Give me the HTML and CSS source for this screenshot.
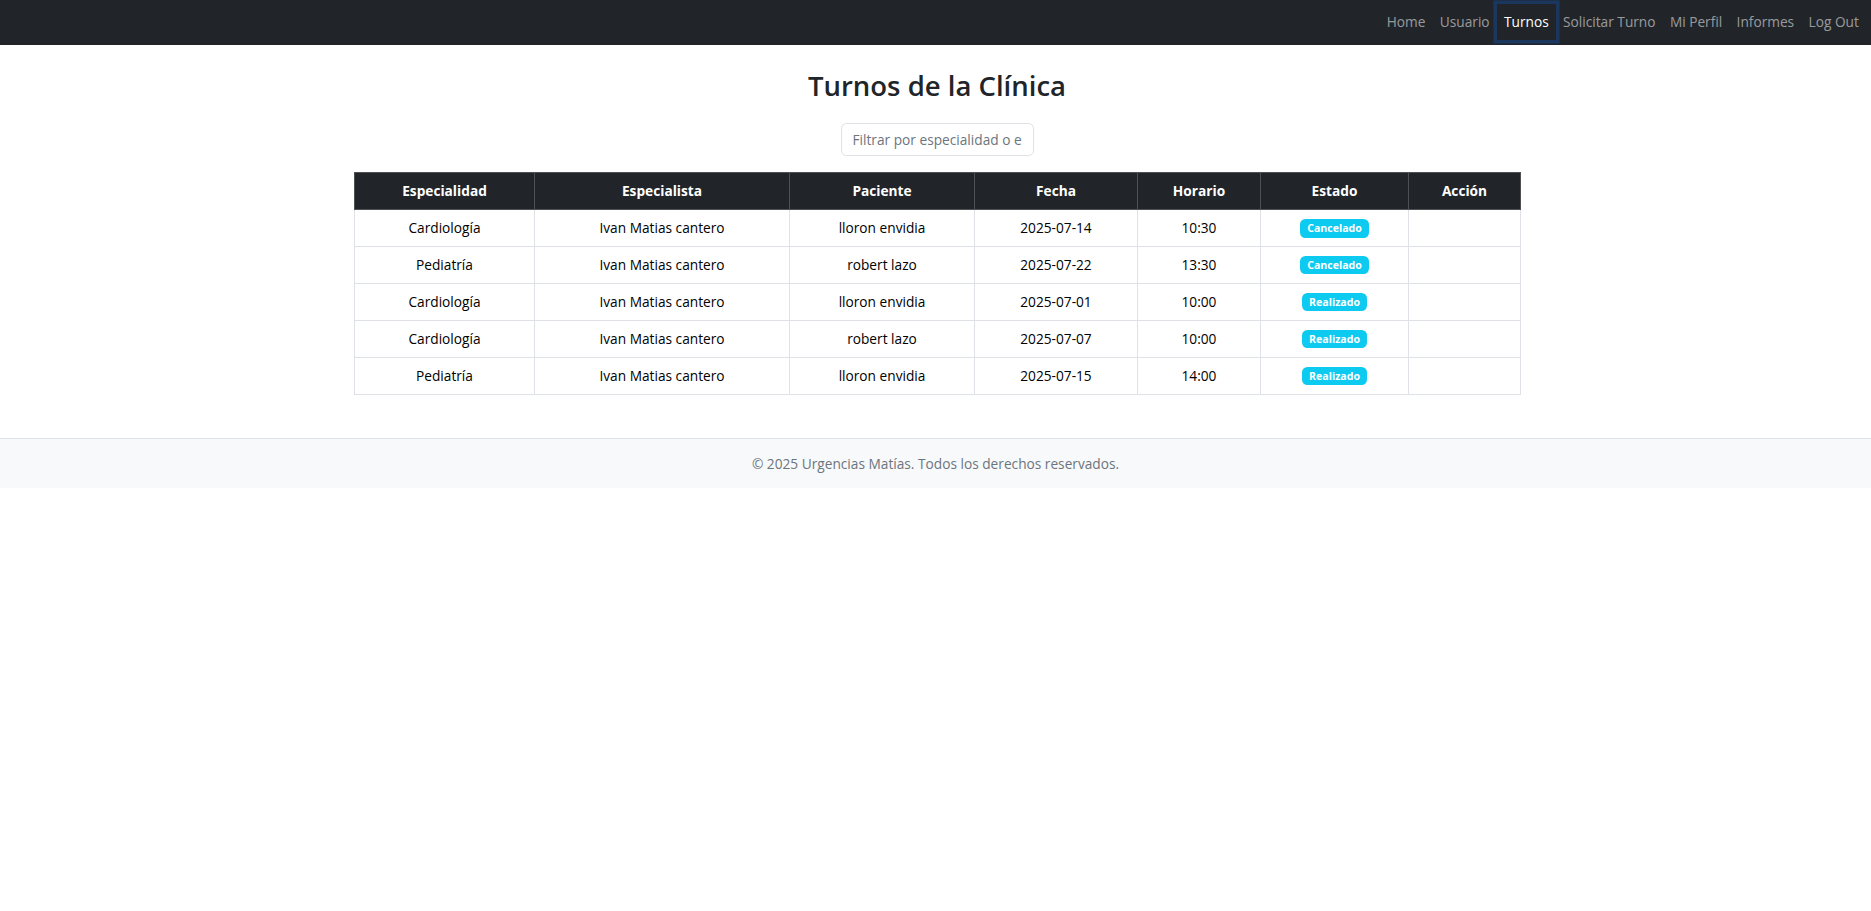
FILE: index.html
```html
<!DOCTYPE html>
<html lang="es">
<head>
<meta charset="utf-8">
<title>Turnos de la Clínica</title>
<link rel="stylesheet" href="styles.css">
</head>
<body>
<nav class="topbar">
  <ul class="nav-links">
    <li><a class="nav-link" href="#">Home</a></li>
    <li><a class="nav-link" href="#">Usuario</a></li>
    <li><a class="nav-link active" href="#">Turnos</a></li>
    <li><a class="nav-link" href="#">Solicitar Turno</a></li>
    <li><a class="nav-link" href="#">Mi Perfil</a></li>
    <li><a class="nav-link" href="#">Informes</a></li>
    <li><a class="nav-link" href="#">Log Out</a></li>
  </ul>
</nav>

<main class="page">
  <h2 class="page-title">Turnos de la Clínica</h2>
  <div class="filter-row">
    <input class="filter-input" type="text" placeholder="Filtrar por especialidad o especialista">
  </div>
  <table class="turnos-table">
    <colgroup>
      <col class="c-esp">
      <col class="c-espista">
      <col class="c-pac">
      <col class="c-fecha">
      <col class="c-hora">
      <col class="c-estado">
      <col class="c-accion">
    </colgroup>
    <thead>
      <tr>
        <th>Especialidad</th>
        <th>Especialista</th>
        <th>Paciente</th>
        <th>Fecha</th>
        <th>Horario</th>
        <th>Estado</th>
        <th>Acción</th>
      </tr>
    </thead>
    <tbody>
      <tr>
        <td>Cardiología</td>
        <td>Ivan Matias cantero</td>
        <td>lloron envidia</td>
        <td>2025-07-14</td>
        <td>10:30</td>
        <td><span class="badge">Cancelado</span></td>
        <td></td>
      </tr>
      <tr>
        <td>Pediatría</td>
        <td>Ivan Matias cantero</td>
        <td>robert lazo</td>
        <td>2025-07-22</td>
        <td>13:30</td>
        <td><span class="badge">Cancelado</span></td>
        <td></td>
      </tr>
      <tr>
        <td>Cardiología</td>
        <td>Ivan Matias cantero</td>
        <td>lloron envidia</td>
        <td>2025-07-01</td>
        <td>10:00</td>
        <td><span class="badge">Realizado</span></td>
        <td></td>
      </tr>
      <tr>
        <td>Cardiología</td>
        <td>Ivan Matias cantero</td>
        <td>robert lazo</td>
        <td>2025-07-07</td>
        <td>10:00</td>
        <td><span class="badge">Realizado</span></td>
        <td></td>
      </tr>
      <tr>
        <td>Pediatría</td>
        <td>Ivan Matias cantero</td>
        <td>lloron envidia</td>
        <td>2025-07-15</td>
        <td>14:00</td>
        <td><span class="badge">Realizado</span></td>
        <td></td>
      </tr>
    </tbody>
  </table>
</main>

<footer class="site-footer">© 2025 Urgencias Matías. Todos los derechos reservados.</footer>
</body>
</html>
```

FILE: styles.css
```css
* {
  box-sizing: border-box;
}

html, body {
  margin: 0;
  padding: 0;
  background: #ffffff;
}

body {
  font-family: "Open Sans", "Noto Sans", sans-serif;
  font-size: 13.7px;
  line-height: 21.6px;
  color: #212529;
}

/* ---------- Navbar ---------- */
.topbar {
  background: #212529;
  height: 45px;
  display: flex;
  justify-content: flex-end;
  padding: 3.6px 5px 0 0;
}

.nav-links {
  list-style: none;
  margin: 0;
  padding: 0;
  display: flex;
}

.nav-link {
  display: block;
  padding: 7.2px 7.2px;
  line-height: 21.6px;
  color: rgba(255, 255, 255, 0.55);
  text-decoration: none;
}

.nav-link.active {
  color: #ffffff;
  box-shadow: 0 0 0 3.6px rgba(13, 110, 253, 0.25);
  border-radius: 0;
}

/* ---------- Main ---------- */
.page {
  width: 1169px;
  margin: 0 auto;
  padding: 23.8px 0 0 3px;
}

.page-title {
  margin: 0 0 19.4px;
  text-align: center;
  font-size: 27.5px;
  line-height: 34.6px;
  font-weight: 600;
  color: #212529;
}

.filter-row {
  display: flex;
  justify-content: center;
  margin-bottom: 15.6px;
}

.filter-input {
  width: 193px;
  height: 33.5px;
  padding: 5px 11px;
  font-family: inherit;
  font-size: 13.7px;
  color: #212529;
  border: 1px solid #dee2e6;
  border-radius: 5.4px;
  background: #ffffff;
  outline: none;
}

.filter-input::placeholder {
  color: #6c757d;
  opacity: 1;
}

/* ---------- Table ---------- */
.turnos-table {
  width: 1166px;
  border-collapse: collapse;
  table-layout: fixed;
  margin: 0;
}

.c-esp { width: 180px; }
.c-espista { width: 255px; }
.c-pac { width: 185px; }
.c-fecha { width: 163px; }
.c-hora { width: 123px; }
.c-estado { width: 148px; }
.c-accion { width: 112px; }

.turnos-table th,
.turnos-table td {
  padding: 7.2px;
  line-height: 21.6px;
  text-align: center;
  vertical-align: middle;
  border: 1px solid #dee2e6;
  color: #000000;
}

.turnos-table th {
  background: #212529;
  color: #ffffff;
  font-weight: 700;
  border-color: #4d5154;
}

.badge {
  display: inline-block;
  padding: 3.9px 7px;
  font-size: 10.6px;
  font-weight: 700;
  line-height: 1;
  color: #ffffff;
  background: #0dcaf0;
  border-radius: 5.4px;
  vertical-align: 1px;
}

/* ---------- Footer ---------- */
.site-footer {
  margin-top: 43px;
  background: #f8f9fa;
  border-top: 1px solid #dee2e6;
  padding: 14px 0;
  line-height: 21px;
  text-align: center;
  color: #6c757d;
  font-size: 13.7px;
}
```
